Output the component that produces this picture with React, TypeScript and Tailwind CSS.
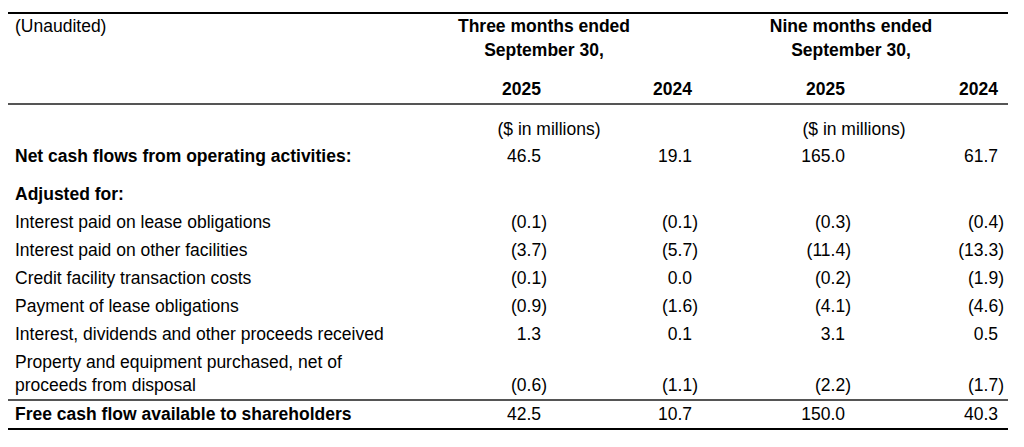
const rows: { label: string[]; values: string[]; bold?: boolean }[] = [
  { label: ["Interest paid on lease obligations"], values: ["(0.1)", "(0.1)", "(0.3)", "(0.4)"] },
  { label: ["Interest paid on other facilities"], values: ["(3.7)", "(5.7)", "(11.4)", "(13.3)"] },
  { label: ["Credit facility transaction costs"], values: ["(0.1)", "0.0", "(0.2)", "(1.9)"] },
  { label: ["Payment of lease obligations"], values: ["(0.9)", "(1.6)", "(4.1)", "(4.6)"] },
  { label: ["Interest, dividends and other proceeds received"], values: ["1.3", "0.1", "3.1", "0.5"] },
]

const cols = "grid grid-cols-[382px_157px_151px_153px_153px_4px]"

function Num({ v }: { v: string }) {
  const neg = v.startsWith("(")
  return (
    <div className={`text-right ${neg ? "pr-0" : "pr-[6px]"}`}>
      {v}
    </div>
  )
}

export default function App() {
  return (
    <div
      className="bg-white w-[1024px] h-[447px] pt-[12px] text-black text-[17.5px]"
      style={{ fontFamily: '"Liberation Sans", Arial, sans-serif' }}
    >
      <div className="mx-[8px] w-[1000px] border-t-2 border-b-2 border-black">
        {/* period headers */}
        <div className={`${cols} leading-[24px]`}>
          <div className="pl-[7px]">(Unaudited)</div>
          <div className="col-span-2 text-center font-bold">
            Three months ended
            <br />
            September 30,
          </div>
          <div className="col-span-3 pr-[4px] text-center font-bold">
            Nine months ended
            <br />
            September 30,
          </div>
        </div>

        <div className={`${cols} leading-[24px] pt-[15px] pb-[2px] border-b-2 border-[#555] font-bold`}>
          <div />
          <Num v="2025" />
          <Num v="2024" />
          <Num v="2025" />
          <Num v="2024" />
        </div>

        <div className={`${cols} leading-[24px] pt-[12px] pb-[1px]`}>
          <div />
          <div className="col-span-2 text-center pl-[10px]">($ in millions)</div>
          <div className="col-span-3 text-center pl-[6px] pr-[4px]">($ in millions)</div>
        </div>

        <div className={`${cols} h-[28px] items-center`}>
          <div className="pl-[7px] font-bold">Net cash flows from operating activities:</div>
          <Num v="46.5" />
          <Num v="19.1" />
          <Num v="165.0" />
          <Num v="61.7" />
        </div>

        <div className={`${cols} h-[28px] mt-[10px] items-center`}>
          <div className="pl-[7px] font-bold">Adjusted for:</div>
        </div>

        {rows.map((r, i) => (
          <div key={i} className={`${cols} h-[28px] items-center`}>
            <div className="pl-[7px]">{r.label[0]}</div>
            {r.values.map((v, j) => (
              <Num key={j} v={v} />
            ))}
          </div>
        ))}

        <div className={`${cols} leading-[22.5px] pt-[3px] pb-[3px] items-end border-b-2 border-[#555]`}>
          <div className="pl-[7px]">
            Property and equipment purchased, net of
            <br />
            proceeds from disposal
          </div>
          <Num v="(0.6)" />
          <Num v="(1.1)" />
          <Num v="(2.2)" />
          <Num v="(1.7)" />
        </div>

        <div className={`${cols} h-[27px] items-center`}>
          <div className="pl-[7px] font-bold">Free cash flow available to shareholders</div>
          <Num v="42.5" />
          <Num v="10.7" />
          <Num v="150.0" />
          <Num v="40.3" />
        </div>
      </div>
    </div>
  )
}
